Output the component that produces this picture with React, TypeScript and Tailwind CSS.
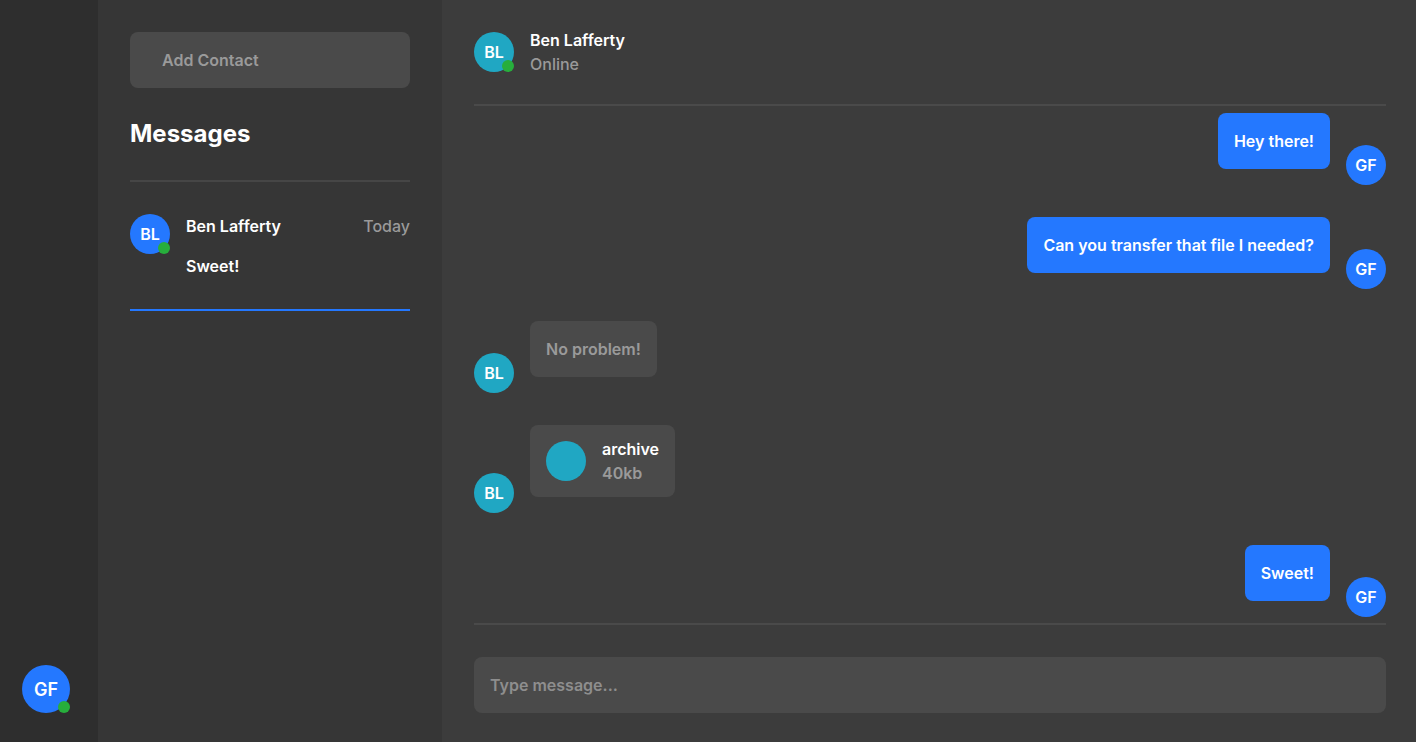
import React from "react";

const Avatar = ({ initials, color, size = 40, online = false }: { initials: string; color: string; size?: number; online?: boolean }) => (
  <div className="relative shrink-0" style={{ width: size, height: size }}>
    <div className={`w-full h-full rounded-full flex items-center justify-center text-white font-semibold ${color} ${size > 44 ? "text-[18px]" : "text-[16px]"}`}>
      {initials}
    </div>
    {online && <div className="absolute right-0 bottom-0 w-3 h-3 rounded-full bg-[#27ae3c]" />}
  </div>
);

const Out = ({ text }: { text: string }) => (
  <div className="flex justify-end items-end gap-4">
    <div className="mb-4 bg-[#2478ff] text-white font-semibold text-[16px] leading-6 px-4 py-4 rounded-lg">{text}</div>
    <Avatar initials="GF" color="bg-[#2478ff]" />
  </div>
);

export default function App() {
  return (
    <div className="flex w-[1416px] h-[742px] text-white" style={{ fontFamily: "Inter, 'Noto Sans', sans-serif" }}>
      <div className="w-[98px] bg-[#2e2e2e] flex flex-col justify-end items-start pl-[22px] pb-[29px]">
        <Avatar initials="GF" color="bg-[#2478ff]" size={48} online />
      </div>
      <div className="w-[344px] bg-[#363636] p-8 flex flex-col">
        <div className="h-14 rounded-lg bg-[#4a4a4a] flex items-center px-8 text-[16px] font-semibold text-[#9a9a9a]">Add Contact</div>
        <div className="mt-[30px] text-[24px] font-bold leading-8">Messages</div>
        <div className="mt-[30px] h-[2px] bg-[#464646]" />
        <div className="mt-[32px] flex gap-4">
          <Avatar initials="BL" color="bg-[#2478ff]" online />
          <div className="flex-1 flex flex-col">
            <div className="flex justify-between text-[16px] leading-6">
              <span className="font-semibold">Ben Lafferty</span>
              <span className="text-[#9a9a9a] font-medium">Today</span>
            </div>
            <div className="mt-4 text-[16px] leading-6 font-semibold">Sweet!</div>
          </div>
        </div>
        <div className="mt-[31px] h-[2px] bg-[#2478ff]" />
      </div>
      <div className="flex-1 bg-[#3c3c3c] pl-8 pr-[30px] pt-8 pb-[29px] flex flex-col">
        <div className="flex gap-4 h-10">
          <Avatar initials="BL" color="bg-[#20a7c3]" online />
          <div className="flex flex-col mt-[-4px]">
            <span className="font-semibold text-[16px] leading-6">Ben Lafferty</span>
            <span className="font-medium text-[16px] leading-6 text-[#9a9a9a]">Online</span>
          </div>
        </div>
        <div className="mt-8 h-[2px] bg-[#4a4a4a]" />
        <div className="flex-1 flex flex-col gap-8 pt-[7px]">
          <Out text="Hey there!" />
          <Out text="Can you transfer that file I needed?" />
          <div className="flex items-end gap-4">
            <Avatar initials="BL" color="bg-[#20a7c3]" />
            <div className="mb-4 bg-[#4a4a4a] text-[#9a9a9a] font-semibold text-[16px] leading-6 px-4 py-4 rounded-lg">No problem!</div>
          </div>
          <div className="flex items-end gap-4">
            <Avatar initials="BL" color="bg-[#20a7c3]" />
            <div className="mb-4 bg-[#4a4a4a] p-4 rounded-lg flex gap-4 h-[72px]">
              <div className="w-10 h-10 rounded-full bg-[#20a7c3]" />
              <div className="flex flex-col h-10">
                <span className="font-semibold text-[16px] leading-6 mt-[-4px]">archive</span>
                <span className="font-semibold text-[16px] leading-6 text-[#9a9a9a]">40kb</span>
              </div>
            </div>
          </div>
          <Out text="Sweet!" />
        </div>
        <div className="h-[2px] bg-[#4a4a4a]" />
        <div className="mt-8 h-14 rounded-lg bg-[#4a4a4a] flex items-center px-4 text-[16px] font-semibold text-[#8e8e8e]">Type message...</div>
      </div>
    </div>
  );
}
